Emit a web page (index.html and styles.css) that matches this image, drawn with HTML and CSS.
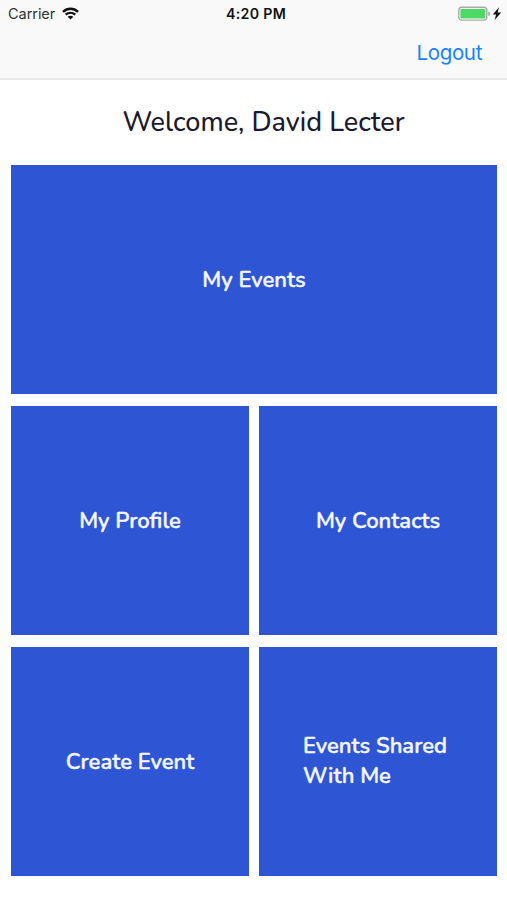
FILE: index.html
```html
<!DOCTYPE html>
<html lang="en">
<head>
<meta charset="utf-8">
<title>Welcome</title>
<link rel="stylesheet" href="styles.css">
</head>
<body>
<header class="top">
  <div class="status">
    <div class="carrier"><span class="carrier-name">Carrier</span>
      <svg class="wifi" viewBox="0 0 18 13"><g fill="none" stroke="#111" stroke-width="2.5"><path d="M1 4.7C5.6.4 12.4.4 17 4.7"/><path d="M3.9 7.8c3-2.7 7.2-2.7 10.2 0"/></g><path d="M6 9.9c1.8-1.5 4.2-1.5 6 0l-3 3z" fill="#111"/></svg>
    </div>
    <time class="clock">4:20 PM</time>
    <svg class="battery" viewBox="0 0 44 16"><rect x=".8" y="1.3" width="28" height="12.800" rx="3" fill="#fff" stroke="#aaa" stroke-width="1.400"/><rect x="2.400" y="2.900" width="24.800" height="9.600" rx="1" fill="#4cd964"/><path d="M30.200 5.300q2 .7 2 2.400t-2 2.400z" fill="#aaa"/><path d="M41 1.200l-6.200 7.200h3.300l-1.500 5.600 6.600-7.400h-3.500z" fill="#111"/></svg>
  </div>
  <nav class="nav"><a class="logout">Logout</a></nav>
</header>
<main class="home">
  <h1 class="welcome"><span class="label">Welcome, David Lecter</span></h1>
  <div class="grid">
    <a class="tile wide"><span class="label">My Events</span></a>
    <a class="tile"><span class="label">My Profile</span></a>
    <a class="tile"><span class="label">My Contacts</span></a>
    <a class="tile"><span class="label">Create Event</span></a>
    <a class="tile shared"><span class="label">Events Shared<br>With Me</span></a>
  </div>
</main>
</body>
</html>
```
FILE: styles.css
```css
* { box-sizing: border-box; }
body { margin: 0; background: #fff; font-family: Nunito, "Open Sans", sans-serif; }
.top { height: 80px; background: #f9f9f9; border-bottom: 2px solid #e8e8e8; font-family: Inter, sans-serif; }
.status { height: 27px; padding: 0 5px 0 8px; display: grid; grid-template-columns: 1fr auto 1fr; align-items: center; color: #111; }
.carrier { display: flex; align-items: center; gap: 7px; }
.carrier-name { font-size: 14.5px; color: #333; letter-spacing: -.05px; }
.wifi { width: 17px; height: 13px; }
.clock { padding-left: 2px; font-size: 14.2px; font-weight: 600; letter-spacing: .3px; }
.battery { width: 44px; height: 16px; justify-self: end; }
.nav { height: 51px; padding-right: 25px; display: flex; align-items: center; justify-content: flex-end; }
.logout { color: #1684fb; font-size: 20.5px; letter-spacing: -.35px; }
.home { padding: 0 10px 0 11px; }
.welcome { height: 85px; margin: 0; padding: 0 0 1px 19px; display: flex; align-items: center; justify-content: center; color: #1b1a30; font-size: 27px; font-weight: 500; }
.grid { display: grid; grid-template-columns: 1fr 1fr; grid-auto-rows: 229px; gap: 12px 10px; }
.tile { display: flex; align-items: center; justify-content: center; background: #2e56d4; color: #f5f7ff; font-size: 22px; line-height: 30px; font-weight: 600; -webkit-text-stroke: .4px #f5f7ff; }
.wide { grid-column: 1 / -1; }
.shared { padding: 0 6px 1px 0; }
.label { white-space: nowrap; }
```
